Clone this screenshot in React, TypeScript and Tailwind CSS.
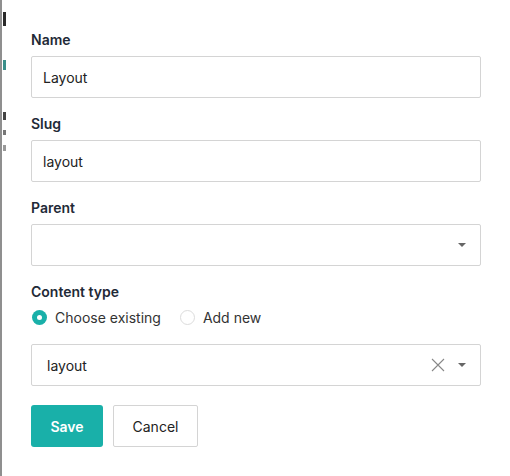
import React from "react";

function Caret() {
  return (
    <svg width="10" height="6" viewBox="0 0 10 6" className="shrink-0">
      <path d="M1 1 L5 5 L9 1 Z" fill="#666" />
    </svg>
  );
}

function Field({ label, children, gap = "gap-[6px]" }: { label: string; children: React.ReactNode; gap?: string }) {
  return (
    <div className={"flex flex-col " + gap}>
      <div className="text-[14px] leading-[20px] font-semibold text-[#1f2a37]">{label}</div>
      {children}
    </div>
  );
}

export default function App() {
  return (
    <div className="w-[510px] h-[476px] bg-white flex font-['Inter','Inter_Variable','Noto_Sans',sans-serif]">
      <div className="w-[6px] shrink-0 flex">
        <div className="w-[2px] bg-[#8f8f8f]" />
        <div className="flex flex-col w-[3px] ml-[1px]">
          <div className="h-[12px]" />
          <div className="h-[14px] bg-[#2a2a2a]" />
          <div className="h-[34px]" />
          <div className="h-[10px] bg-[#3a8f8a]" />
          <div className="h-[42px]" />
          <div className="h-[8px] bg-[#444]" />
          <div className="h-[10px]" />
          <div className="h-[5px] bg-[#777]" />
          <div className="h-[10px]" />
          <div className="h-[6px] bg-[#999]" />
        </div>
      </div>
      <div className="flex-1 pl-[25px] pr-[29px] pt-[30px] flex flex-col">
        <div className="flex flex-col gap-[16px]">
          <Field label="Name">
            <div className="h-[42px] border border-[#d4d4d4] rounded-[2px] flex items-center px-[11px] text-[14px] text-[#222]">
              Layout
            </div>
          </Field>
          <Field label="Slug">
            <div className="h-[42px] border border-[#d4d4d4] rounded-[2px] flex items-center px-[11px] text-[14px] text-[#222]">
              layout
            </div>
          </Field>
          <Field label="Parent">
            <div className="h-[42px] border border-[#d4d4d4] rounded-[2px] flex items-center justify-end pr-[13px]">
              <Caret />
            </div>
          </Field>
          <Field label="Content type" gap="gap-[4px]">
            <div className="h-[22px] flex items-center text-[14px] text-[#333]">
              <div className="w-[15px] h-[15px] rounded-full bg-[#19b0a9] flex items-center justify-center ml-[1px]">
                <div className="w-[5px] h-[5px] rounded-full bg-white" />
              </div>
              <span className="ml-[8px]">Choose existing</span>
              <div className="w-[15px] h-[15px] rounded-full border border-[#dcdcdc] ml-[19px]" />
              <span className="ml-[8px]">Add new</span>
            </div>
          </Field>
        </div>
        <div className="mt-[16px] h-[42px] border border-[#d4d4d4] rounded-[2px] flex items-center pl-[15px] pr-[13px] text-[14px] text-[#222]">
          <span className="flex-1">layout</span>
          <svg width="14" height="14" viewBox="0 0 14 14" className="mr-[12px]">
            <path d="M1 1 L13 13 M13 1 L1 13" stroke="#888" strokeWidth="1.1" />
          </svg>
          <Caret />
        </div>
        <div className="mt-[19px] flex gap-[10px]">
          <div className="w-[72px] h-[42px] bg-[#19b0a9] rounded-[3px] flex items-center justify-center text-white text-[14px] font-semibold">
            Save
          </div>
          <div className="w-[85px] h-[42px] border border-[#d4d4d4] rounded-[2px] flex items-center justify-center text-[#222] text-[14px]">
            Cancel
          </div>
        </div>
      </div>
    </div>
  );
}
